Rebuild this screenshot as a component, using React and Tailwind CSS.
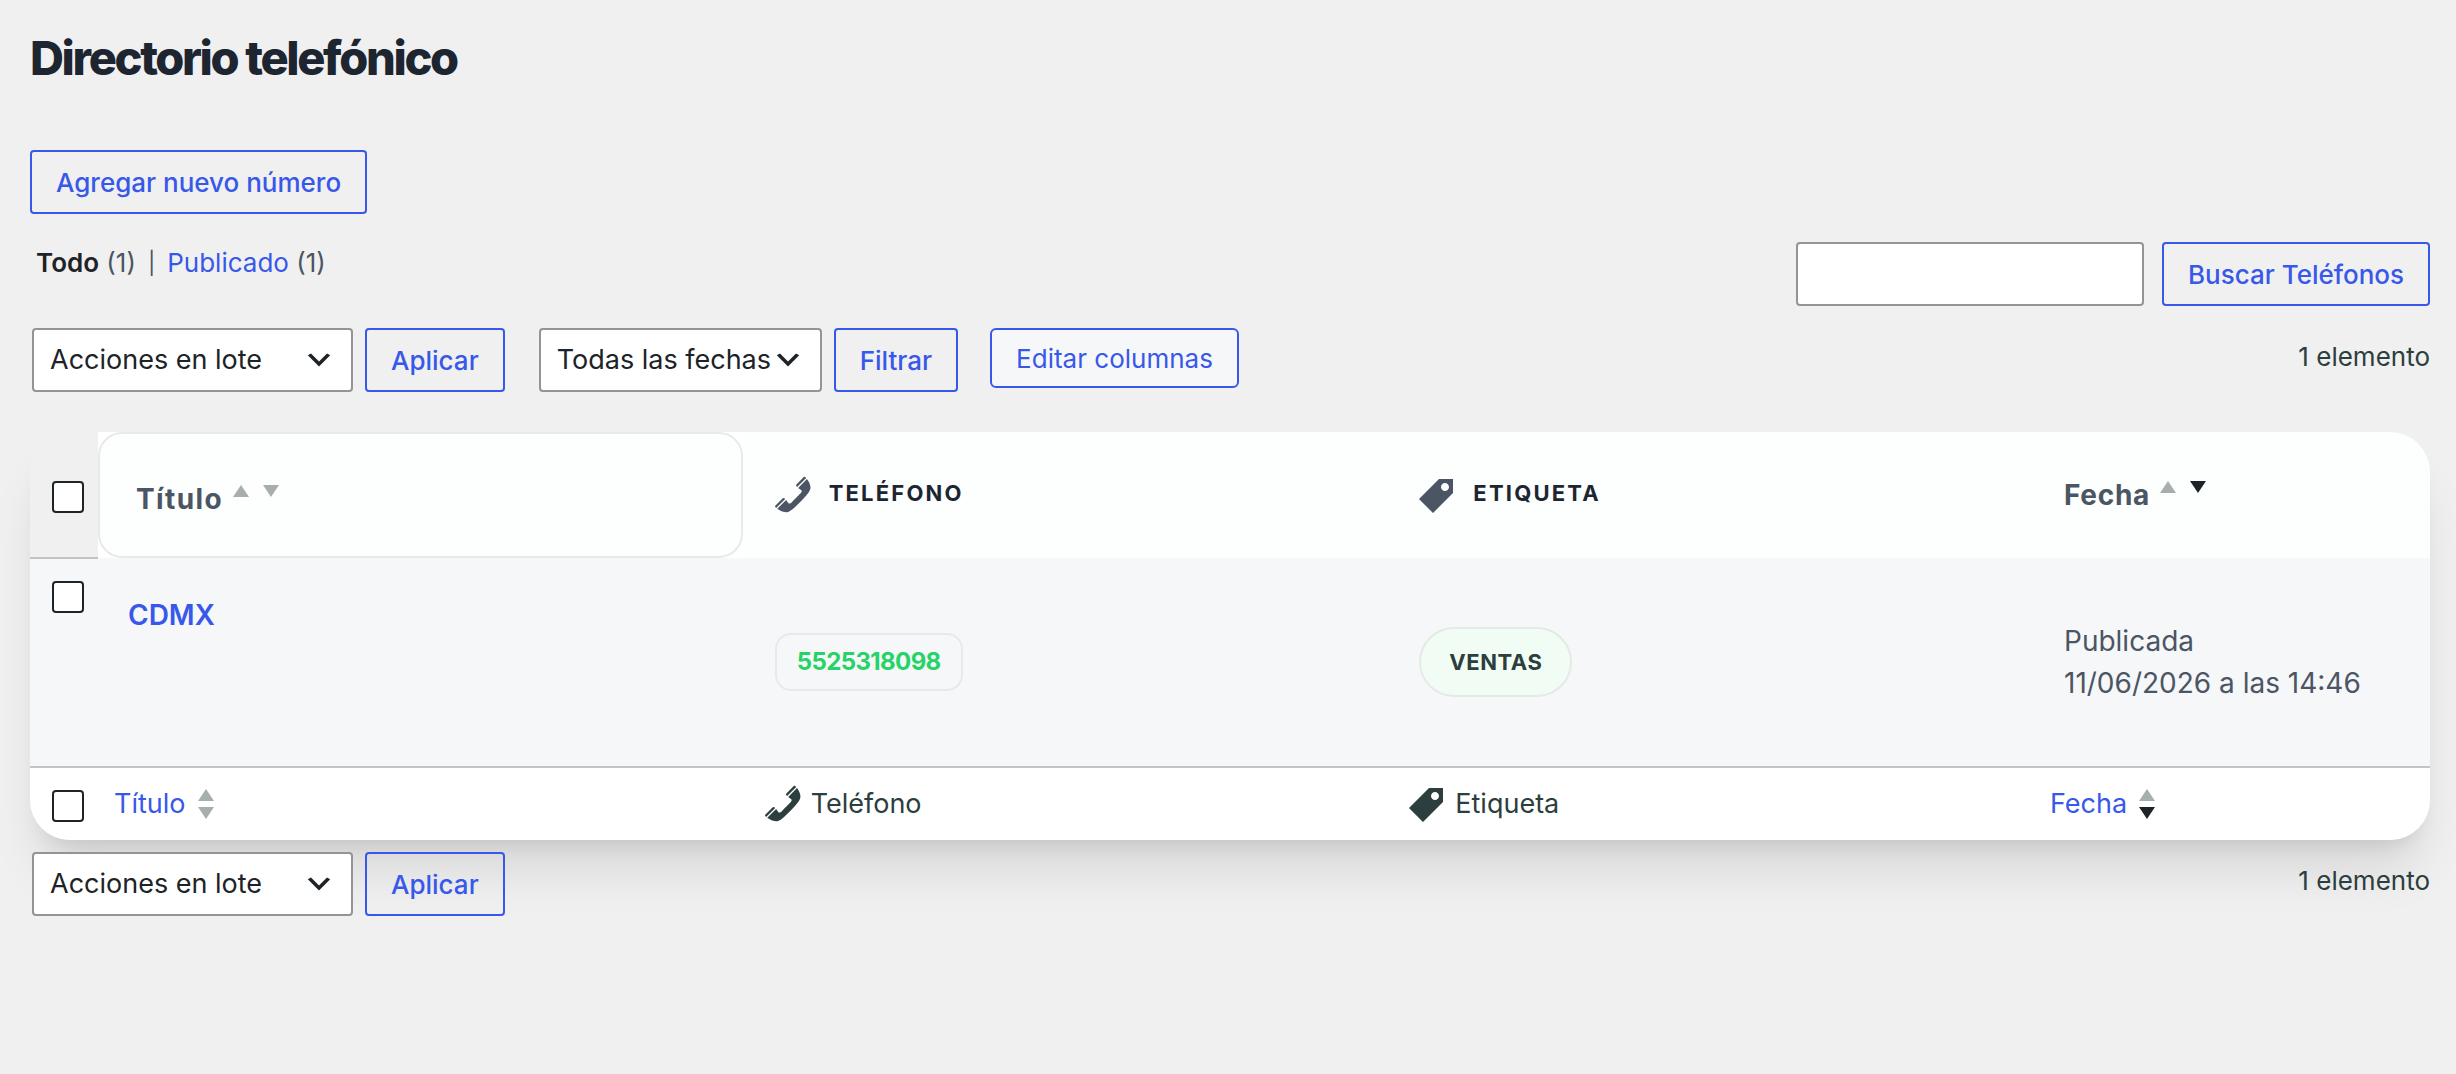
import React from 'react';
import clsx from 'clsx';

const PhoneIcon = ({ className }) => (
    <svg viewBox="0 0 20 20" fill="currentColor" aria-hidden="true" className={clsx('w-10 h-10 shrink-0', className)}>
        <path d="M12.06 6l-.21-.2c-.52-.54-.43-.79.08-1.3l2.72-2.75c.81-.82.96-1.21 1.73-.48l.21.2zm.53.45l4.4-4.4c.7.94 2.34 3.47 1.53 5.34-.73 1.67-1.09 1.75-2 3-1.85 2.11-4.18 4.37-6 6.07-1.26.91-1.31 1.33-3 2-1.8.71-4.4-.89-5.38-1.56l4.4-4.4 1.18 1.62c.34.46 1.2-.06 1.8-.66 1.04-1.05 3.18-3.18 4-4.07.59-.59 1.12-1.45.66-1.8zM1.57 16.5l-.21-.21c-.68-.74-.29-.9.52-1.7l2.74-2.72c.51-.49.75-.6 1.27-.11l.2.21z" />
    </svg>
);

const TagIcon = ({ className }) => (
    <svg viewBox="0 0 20 20" fill="currentColor" aria-hidden="true" className={clsx('w-10 h-10 shrink-0', className)}>
        <path d="M11 2h7v7L8 19l-7-7zm3 6c1.1 0 2-.9 2-2s-.9-2-2-2-2 .9-2 2 .9 2 2 2z" />
    </svg>
);

const Triangle = ({ down, active }) => (
    <svg viewBox="0 0 16 12" fill="currentColor" aria-hidden="true" className={clsx('w-4 h-3', active ? 'text-[#1d2327]' : 'text-[#a7aeae]')}>
        <path d={down ? 'M0 0h16L8 12z' : 'M8 0l8 12H0z'} />
    </svg>
);

const Button = ({ children, className, type = 'button' }) => (
    <button
        type={type}
        className={clsx('h-16 px-6 border-2 border-[#3858e9] rounded text-[26px] font-medium text-[#3858e9] whitespace-nowrap', className)}
    >
        {children}
    </button>
);

const Select = ({ label, options, className }) => (
    <div className={clsx('relative', className)}>
        <select
            aria-label={label}
            className="appearance-none w-full h-16 pl-4 pr-10 bg-white border-2 border-[#949494] rounded text-[27px] text-[#1d2327]"
        >
            {options.map((option) => (
                <option key={option}>{option}</option>
            ))}
        </select>
        <svg viewBox="0 0 20 20" fill="currentColor" aria-hidden="true" className="absolute right-[18px] top-4 w-8 h-8 text-[#1d2327] pointer-events-none">
            <path d="M5 6l5 5 5-5 2 1-7 7-7-7 2-1z" />
        </svg>
    </div>
);

const Checkbox = ({ label }) => (
    <input
        type="checkbox"
        aria-label={label}
        className="appearance-none block w-8 h-8 ml-[22px] bg-white border-2 border-[#1d2327] rounded"
    />
);

const BulkActions = () => (
    <div className="flex gap-3">
        <Select label="Acciones en lote" options={['Acciones en lote', 'Editar', 'Mover a la papelera']} className="w-[321px]" />
        <Button>Aplicar</Button>
    </div>
);

const ItemCount = () => <span className="ml-auto mt-2 text-[26px] leading-[42px] text-[#2c3e3e]">1 elemento</span>;

const App = () => {
    return (
        <div className="min-h-screen bg-[#f0f0f0] pl-[30px] pr-[26px] pt-8 font-['Inter','Liberation_Sans',sans-serif]">
            <h1 className="text-[47px] leading-[52px] font-extrabold tracking-tighter text-[#1d2530]">Directorio telefónico</h1>

            <Button className="mt-[66px]">Agregar nuevo número</Button>

            <div className="flex justify-between mt-7">
                <ul className="flex pl-1.5 text-[26px] leading-[42px] text-[#4b5563]">
                    <li>
                        <a href="#todo" className="font-semibold text-[#1d2327]">Todo</a> (1)
                    </li>
                    <li className="px-3 text-[22px]">|</li>
                    <li>
                        <a href="#publicado" className="text-[#3858e9]">Publicado</a> (1)
                    </li>
                </ul>
                <form className="flex gap-[18px]">
                    <input
                        type="search"
                        aria-label="Buscar Teléfonos"
                        className="w-[348px] h-16 px-4 bg-white border-2 border-[#949494] rounded text-[26px]"
                    />
                    <Button>Buscar Teléfonos</Button>
                </form>
            </div>

            <div className="flex items-start mt-[22px] pl-0.5">
                <BulkActions />
                <div className="flex gap-3 ml-[34px]">
                    <Select label="Filtrar por fecha" options={['Todas las fechas', 'junio 2026']} className="w-[283px]" />
                    <Button>Filtrar</Button>
                </div>
                <button
                    type="button"
                    className="h-[60px] ml-8 px-6 bg-[#f6f7f9] border-2 border-[#3858e9] rounded-md text-[26px] text-[#3858e9] whitespace-nowrap"
                >
                    Editar columnas
                </button>
                <ItemCount />
            </div>

            <div className="mt-10 rounded-[40px] overflow-hidden shadow-[0_40px_50px_-10px_rgba(0,0,0,0.1),0_16px_20px_-12px_rgba(0,0,0,0.1)]">
                <table className="w-full table-fixed text-left text-[27px] text-[#2c3e3e]">
                    <colgroup>
                        <col className="w-[68px]" />
                        <col />
                        <col />
                        <col />
                        <col className="w-[398px]" />
                    </colgroup>
                    <thead>
                        <tr className="h-[126px]">
                            <td className="pt-1 border-b-2 border-[#c3c4c7]">
                                <Checkbox label="Seleccionar todo" />
                            </td>
                            <th className="p-0 bg-white">
                                <div className="flex items-center h-[126px] px-9 pt-2 bg-[#fcfffe] border-2 border-[#e8eaea] rounded-3xl">
                                    <a href="#titulo" className="flex items-center gap-2.5 text-[28px] font-bold tracking-wider text-[#4b5563]">
                                        Título
                                        <span className="flex gap-3.5 pb-4">
                                            <Triangle />
                                            <Triangle down />
                                        </span>
                                    </a>
                                </div>
                            </th>
                            <th className="px-[30px] bg-[#fcfffe]">
                                <div className="flex items-center gap-4 text-[22px] font-bold tracking-widest text-[#1d2530]">
                                    <PhoneIcon className="text-[#4b5563]" />
                                    <span className="pb-1">TELÉFONO</span>
                                </div>
                            </th>
                            <th className="px-[30px] bg-[#fcfffe]">
                                <div className="flex items-center gap-4 text-[22px] font-bold tracking-widest text-[#1d2530]">
                                    <TagIcon className="text-[#4b5563]" />
                                    <span className="pb-1">ETIQUETA</span>
                                </div>
                            </th>
                            <th className="px-8 bg-[#fcfffe]">
                                <a href="#fecha" className="flex items-center gap-2.5 text-[28px] font-bold tracking-wide text-[#4b5563]">
                                    Fecha
                                    <span className="flex gap-3.5 pb-4">
                                        <Triangle />
                                        <Triangle down active />
                                    </span>
                                </a>
                            </th>
                        </tr>
                    </thead>
                    <tbody>
                        <tr className="h-[209px] bg-[#f6f7f9]">
                            <td className="pt-[22px] align-top">
                                <Checkbox label="Seleccionar CDMX" />
                            </td>
                            <td className="pt-9 pl-[30px] align-top">
                                <a href="#cdmx" className="text-[28px] font-semibold text-[#3858e9]">CDMX</a>
                            </td>
                            <td className="px-8">
                                <span className="inline-flex items-center h-[58px] px-5 border-2 border-[#e8eaea] rounded-2xl text-[24px] font-bold tracking-tight text-[#25d366]">
                                    5525318098
                                </span>
                            </td>
                            <td className="px-8">
                                <span className="inline-flex items-center h-[70px] px-7 bg-[#f1fcf4] border-2 border-[#e4eae6] rounded-full text-[22px] font-bold tracking-wide">
                                    VENTAS
                                </span>
                            </td>
                            <td className="px-8 text-[28px] leading-[42px] text-[#4b5563]">
                                Publicada
                                <br />
                                11/06/2026 a las 14:46
                            </td>
                        </tr>
                    </tbody>
                    <tfoot>
                        <tr className="h-[73px] bg-white border-t-2 border-[#c3c4c7]">
                            <td className="pt-1">
                                <Checkbox label="Seleccionar todo" />
                            </td>
                            <th className="px-4 font-normal">
                                <a href="#titulo" className="flex items-center gap-3 text-[#3858e9]">
                                    Título
                                    <span className="flex flex-col gap-1.5">
                                        <Triangle />
                                        <Triangle down />
                                    </span>
                                </a>
                            </th>
                            <th className="px-5 font-normal">
                                <div className="flex items-center gap-2">
                                    <PhoneIcon />
                                    Teléfono
                                </div>
                            </th>
                            <th className="px-5 font-normal">
                                <div className="flex items-center gap-2">
                                    <TagIcon />
                                    Etiqueta
                                </div>
                            </th>
                            <th className="px-[18px] font-normal">
                                <a href="#fecha" className="flex items-center gap-3 text-[#3858e9]">
                                    Fecha
                                    <span className="flex flex-col gap-1.5">
                                        <Triangle />
                                        <Triangle down active />
                                    </span>
                                </a>
                            </th>
                        </tr>
                    </tfoot>
                </table>
            </div>

            <div className="flex items-start mt-3 pl-0.5">
                <BulkActions />
                <ItemCount />
            </div>
        </div>
    );
};

export default App;
